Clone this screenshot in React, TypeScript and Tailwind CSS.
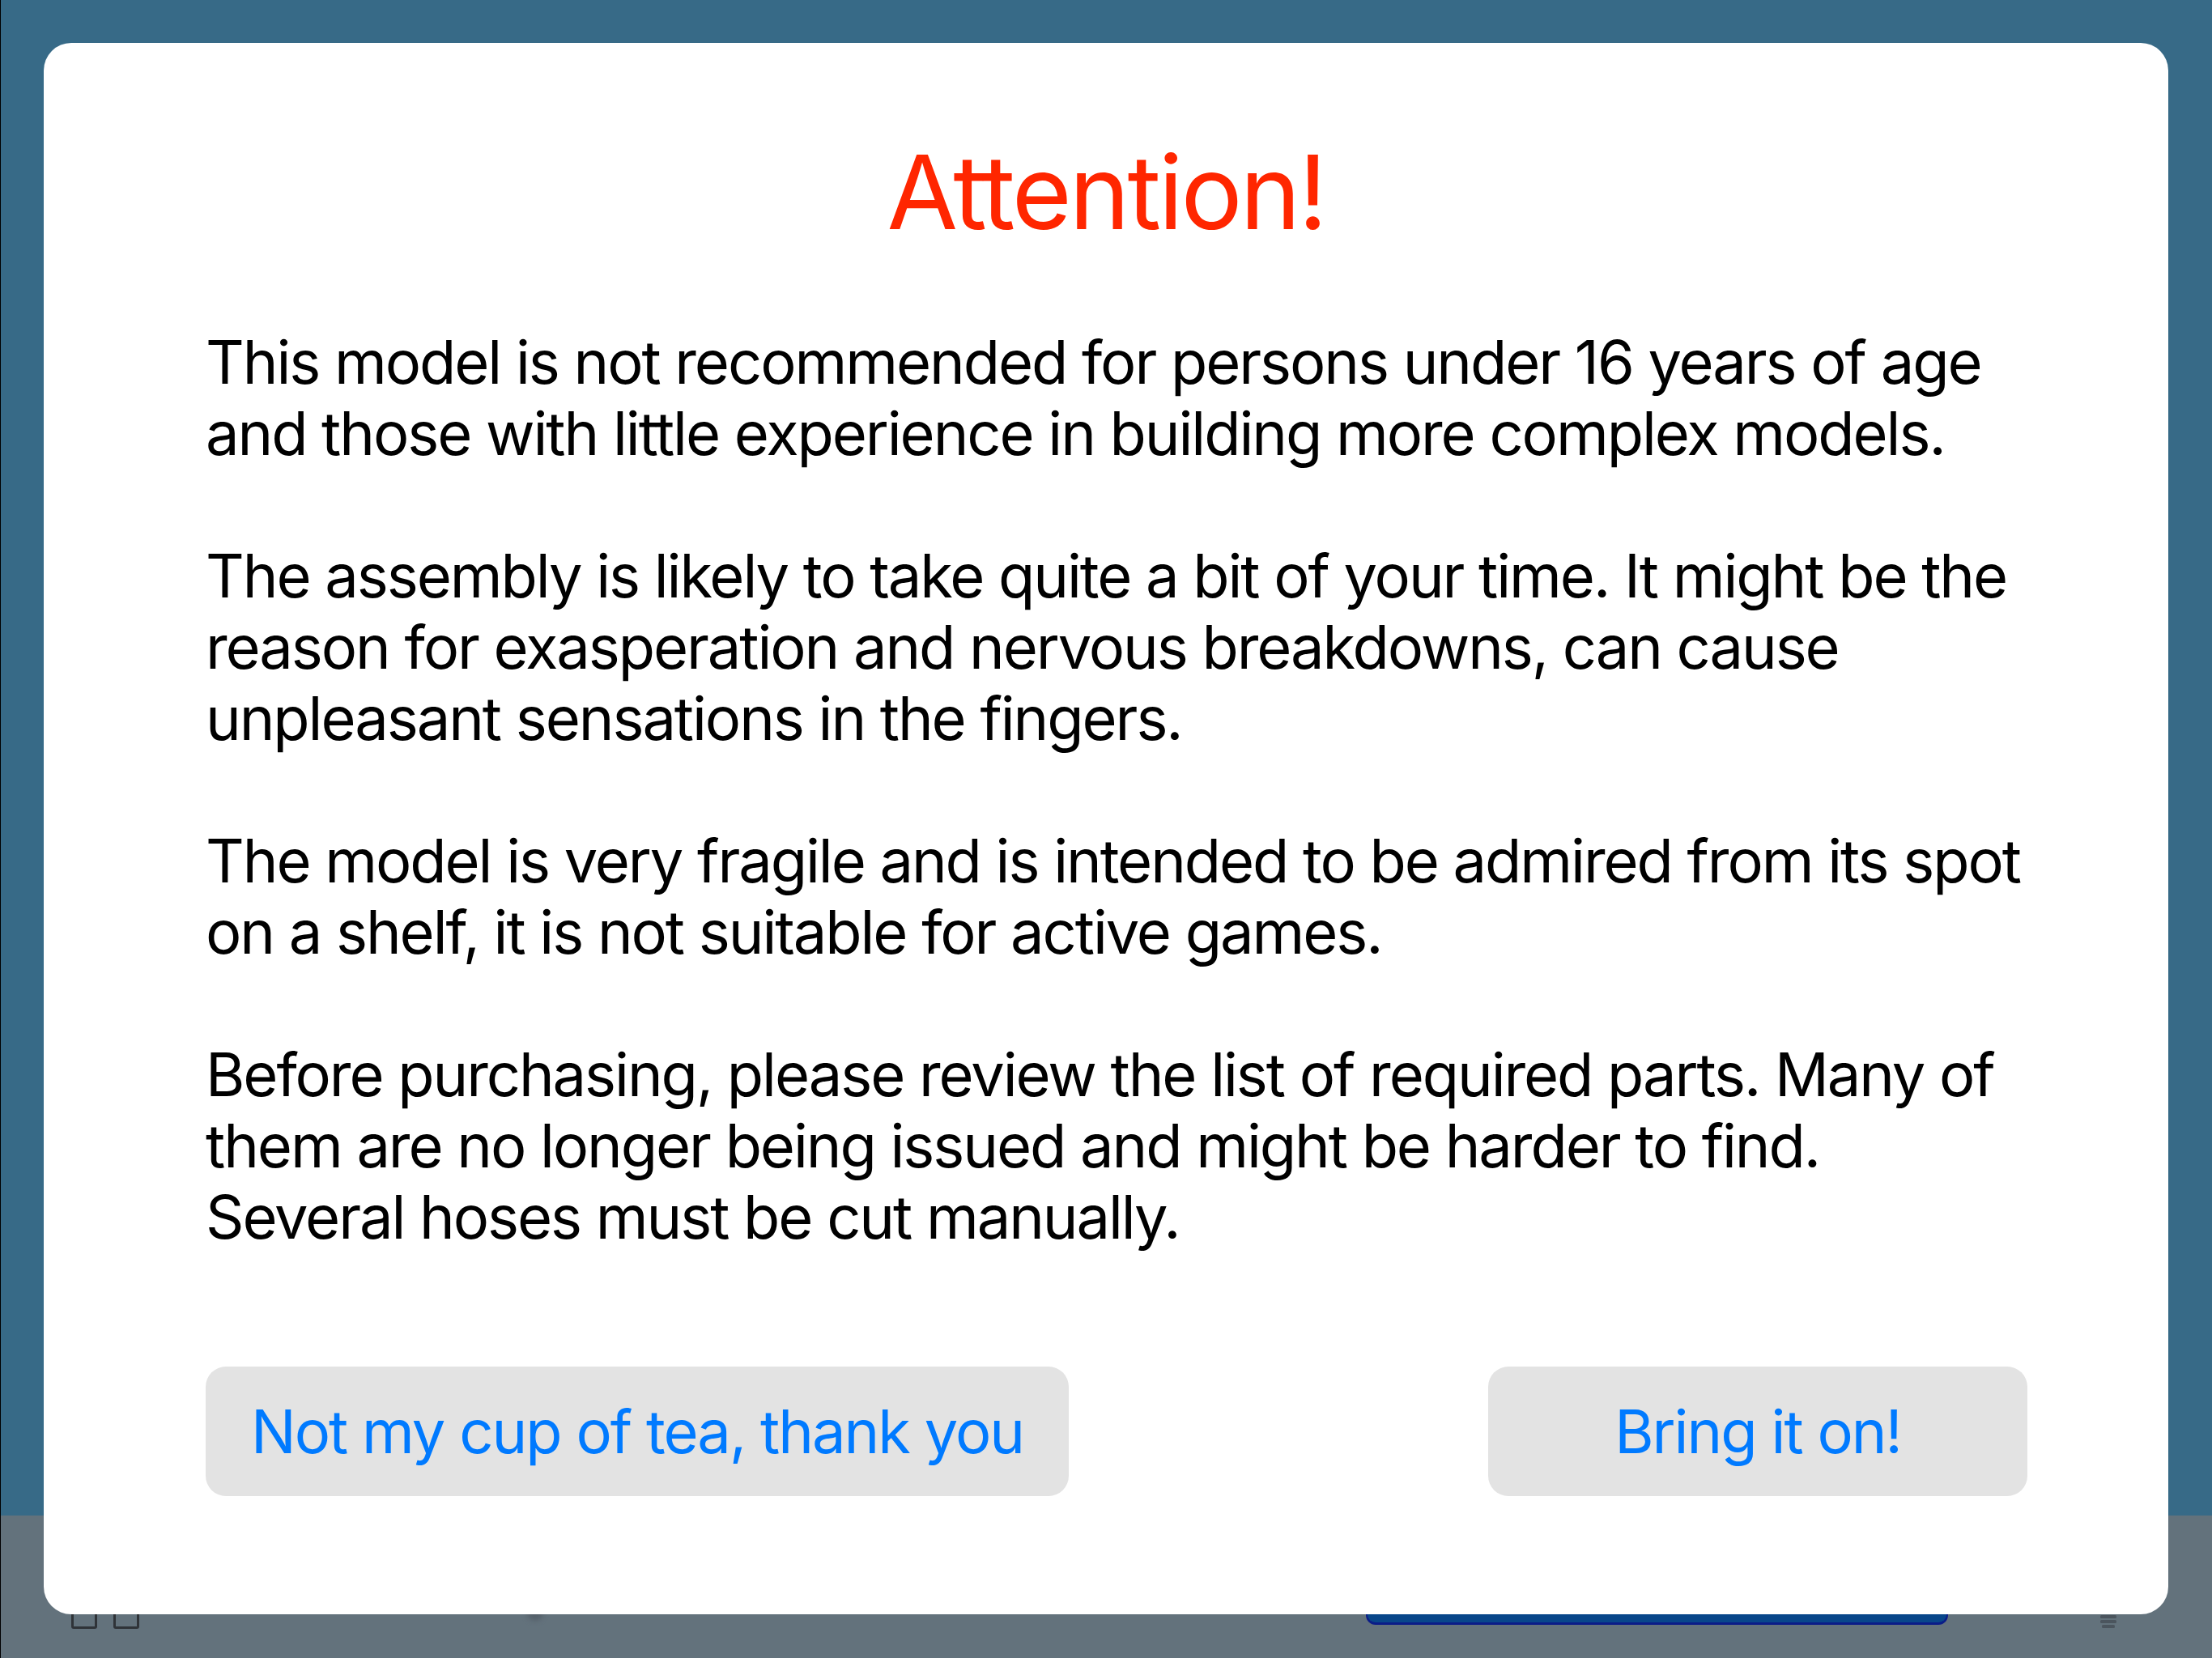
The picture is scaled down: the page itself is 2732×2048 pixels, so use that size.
import React from "react";

const paragraphs = [
  "This model is not recommended for persons under 16 years of age and those with little experience in building more complex models.",
  "The assembly is likely to take quite a bit of your time. It might be the reason for exasperation and nervous breakdowns, can cause unpleasant sensations in the fingers.",
  "The model is very fragile and is intended to be admired from its spot on a shelf, it is not suitable for active games.",
  "Before purchasing, please review the list of required parts. Many of them are no longer being issued and might be harder to find. Several hoses must be cut manually.",
];

// Toolbar of the screen underneath the alert, mostly covered by it
function BottomBar() {
  return (
    <div className="flex h-[176px] items-end bg-[#63727c] pl-[87px]">
      <div className="mb-[36px] flex gap-[20px]">
        <div className="h-[32px] w-[32px] rounded-[3px] border-[3px] border-[#2f3338]" />
        <div className="h-[32px] w-[32px] rounded-[3px] border-[3px] border-[#2f3338]" />
      </div>
      <div className="mb-[46px] ml-[479px] h-[20px] w-[20px] rounded-full bg-[#55606a] blur-[3px]" />
      <div className="mb-[41px] ml-[1016px] h-[90px] w-[719px] rounded-[12px] border-b-[3px] border-x-2 border-[#0a1c88] bg-[#08468a]" />
      <svg className="mb-[35px] ml-[187px]" width="22" height="24" viewBox="0 0 22 24">
        <rect x="1" y="0" width="20" height="4" rx="1.5" fill="#4b555e" />
        <rect x="1" y="6" width="20" height="4" rx="1.5" fill="#4b555e" />
        <rect x="1" y="12" width="20" height="4" rx="1.5" fill="#4b555e" />
        <rect x="3" y="18" width="16" height="4" rx="1.5" fill="#4b555e" />
      </svg>
    </div>
  );
}

function AlertButton({ label, width }: { label: string; width: string }) {
  return (
    <button
      className={`${width} flex h-[160px] items-center justify-center rounded-[25px] bg-[#e3e3e3] text-[74px] leading-[88px] tracking-[-0.027em] text-[#007aff]`}
    >
      {label}
    </button>
  );
}

export default function App() {
  return (
    <div className="relative flex h-[2048px] w-[2732px] flex-col overflow-hidden border-l border-black bg-[#376a87] font-['Inter','Liberation_Sans',sans-serif]">
      <div className="flex-1" />
      <BottomBar />

      {/* Warning alert */}
      <div className="absolute left-[53px] top-[53px] flex h-[1941px] w-[2624px] flex-col rounded-[34px] bg-white pt-[121px] pb-[146px]">
        <h1 className="text-center text-[127px] leading-[127px] tracking-[-0.025em] text-[#ff2600]">Attention!</h1>

        <div className="mt-[102px] flex flex-col gap-[88px] pl-[200px] pr-[174px] text-[74px] leading-[88px] tracking-[-0.028em] text-black">
          {paragraphs.map((p) => (
            <p key={p}>{p}</p>
          ))}
        </div>

        <div className="mt-auto flex justify-between pl-[200px] pr-[174px]">
          <AlertButton label="Not my cup of tea, thank you" width="w-[1066px]" />
          <AlertButton label="Bring it on!" width="w-[666px]" />
        </div>
      </div>
    </div>
  );
}
